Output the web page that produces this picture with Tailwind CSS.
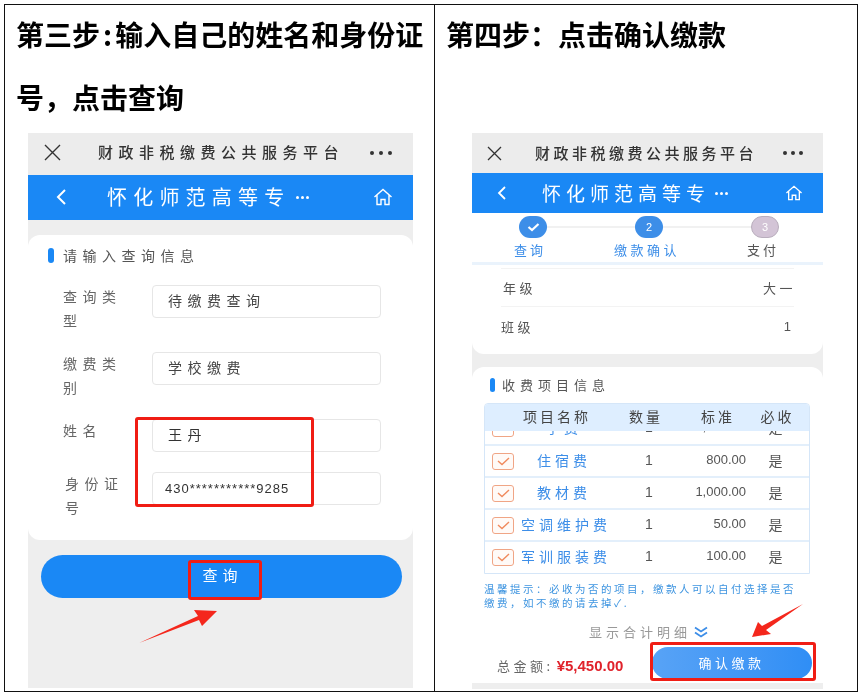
<!DOCTYPE html>
<html lang="zh">
<head>
<meta charset="utf-8">
<script src="https://cdn.jsdelivr.net/npm/@tailwindcss/browser@4"></script>
</head>
<body class="bg-white m-0">
<div class="relative w-[862px] h-[698px] overflow-hidden bg-white pt-[4px] pl-[4px] [font-family:'Noto_Sans_CJK_SC',sans-serif] text-[#444]">
  <div class="grid grid-cols-[430px_424px] w-[854px] h-[688px] border border-[#111]">
    <!-- left cell -->
    <div class="border-r border-[#111] h-full overflow-hidden">
      <h2 class="h-[130px] -mt-[2px] pl-[11px] text-[28px] leading-[63px] font-bold text-black blur-[0.3px] whitespace-nowrap">第三步<span class="mx-[3px]">:</span>输入自己的姓名和身份证<br>号&#xFF0C;点击查询</h2>
      <div class="ml-[23px] w-[385px] h-[555px] bg-[#eeeeee] blur-[0.3px] flex flex-col">
        <div class="h-[42px] shrink-0 bg-[#ececec] flex items-center pl-[15px] pr-[21px] pb-[3px]">
          <svg class="w-[19px] h-[19px]" viewBox="0 0 19 19" fill="none" stroke="#333" stroke-width="1.4"><path d="M2 2l15 15M17 2L2 17"/></svg>
          <span class="ml-[36px] text-[15px] tracking-[5.500px] font-medium text-[#333] whitespace-nowrap">财政非税缴费公共服务平台</span>
          <span class="ml-auto flex gap-[5px]"><i class="w-[4px] h-[4px] rounded-full bg-[#333]"></i><i class="w-[4px] h-[4px] rounded-full bg-[#333]"></i><i class="w-[4px] h-[4px] rounded-full bg-[#333]"></i></span>
        </div>
        <div class="h-[45px] shrink-0 bg-[#1a88f5] flex items-center pl-[27px] pr-[20px] pb-[1px] text-white">
          <svg class="w-[12px] h-[18px]" viewBox="0 0 12 18" fill="none" stroke="#fff" stroke-width="2"><path d="M10 2L3 9l7 7"/></svg>
          <span class="ml-[40px] text-[20px] tracking-[6.200px] whitespace-nowrap">怀化师范高等专</span>
          <span class="ml-[6px] flex gap-[2px]"><i class="w-[3px] h-[3px] rounded-full bg-white"></i><i class="w-[3px] h-[3px] rounded-full bg-white"></i><i class="w-[3px] h-[3px] rounded-full bg-white"></i></span>
          <svg class="ml-auto w-[20px] h-[18px]" viewBox="0 0 20 18" fill="none" stroke="#fff" stroke-width="1.4"><path d="M1.500 9L10 1.500 18.500 9M4 7v9.500h4v-5h4v5h4V7"/></svg>
        </div>
        <div class="mt-[15px] h-[305px] shrink-0 bg-white rounded-xl pt-[10px]">
          <div class="flex items-center h-[20px] pl-[20px]">
            <i class="w-[6px] h-[15px] rounded-full bg-[#1a88f5]"></i>
            <span class="ml-[9px] text-[14px] tracking-[5.500px] text-[#555]">请输入查询信息</span>
          </div>
          <div class="mt-[19px] flex flex-col gap-[19px] pl-[35px] text-[14px] tracking-[5.500px] leading-[24px] text-[#666]">
            <div class="flex items-start">
              <div class="w-[60px] mr-[29px]">查询类型</div>
              <div class="mt-[1px] w-[229px] h-[33px] border border-[#e6e6e6] rounded-[4px] pl-[15px] leading-[29px] text-[#444]">待缴费查询</div>
            </div>
            <div class="flex items-start">
              <div class="w-[60px] mr-[29px]">缴费类别</div>
              <div class="mt-[1px] w-[229px] h-[33px] border border-[#e6e6e6] rounded-[4px] pl-[15px] leading-[29px] text-[#444]">学校缴费</div>
            </div>
            <div class="flex items-start">
              <div class="w-[60px] mr-[29px]">姓名</div>
              <div class="mt-[1px] w-[229px] h-[33px] border border-[#e6e6e6] rounded-[4px] pl-[15px] leading-[29px] text-[#333]">王丹</div>
            </div>
            <div class="flex items-start">
              <div class="w-[60px] ml-[2px] mr-[27px]">身份证号</div>
              <div class="mt-[1px] w-[229px] h-[33px] border border-[#e6e6e6] rounded-[4px] pl-[12px] leading-[31px] text-[#333] text-[13px] tracking-[1px] [font-family:'Liberation_Sans',sans-serif] whitespace-nowrap">430***********9285</div>
            </div>
          </div>
        </div>
        <div class="mt-[15px] ml-[13px] mr-[11px] h-[43px] shrink-0 rounded-full bg-[#1a88f5] flex items-center justify-center pl-[2px] pb-[2px] text-white text-[15px] tracking-[5px]">查询</div>
      </div>
    </div>
    <!-- right cell -->
    <div class="h-full overflow-hidden">
      <h2 class="h-[130px] -mt-[2px] pl-[11px] text-[28px] leading-[63px] font-bold text-black blur-[0.3px] whitespace-nowrap">第四步&#xFF1A;点击确认缴款</h2>
      <div class="ml-[37px] w-[351px] h-[556px] bg-[#eeeeee] blur-[0.3px] flex flex-col">
        <div class="h-[40px] shrink-0 bg-[#ececec] flex items-center pl-[14px] pr-[20px]">
          <svg class="w-[17px] h-[17px]" viewBox="0 0 17 17" fill="none" stroke="#333" stroke-width="1.300"><path d="M2 2l13 13M15 2L2 15"/></svg>
          <span class="ml-[32px] text-[15px] tracking-[3.500px] font-medium text-[#333] whitespace-nowrap">财政非税缴费公共服务平台</span>
          <span class="ml-auto flex gap-[4px]"><i class="w-[4px] h-[4px] rounded-full bg-[#333]"></i><i class="w-[4px] h-[4px] rounded-full bg-[#333]"></i><i class="w-[4px] h-[4px] rounded-full bg-[#333]"></i></span>
        </div>
        <div class="h-[40px] shrink-0 bg-[#1a88f5] flex items-center pl-[24px] pr-[20px] text-white">
          <svg class="w-[11px] h-[16px]" viewBox="0 0 11 16" fill="none" stroke="#fff" stroke-width="1.800"><path d="M9 2L3 8l6 6"/></svg>
          <span class="ml-[35px] text-[19px] tracking-[5px] whitespace-nowrap">怀化师范高等专</span>
          <span class="ml-[5px] flex gap-[2px]"><i class="w-[3px] h-[3px] rounded-full bg-white"></i><i class="w-[3px] h-[3px] rounded-full bg-white"></i><i class="w-[3px] h-[3px] rounded-full bg-white"></i></span>
          <svg class="ml-auto w-[18px] h-[16px]" viewBox="0 0 20 18" fill="none" stroke="#fff" stroke-width="1.500"><path d="M1.500 9L10 1.500 18.500 9M4 7v9.500h4v-5h4v5h4V7"/></svg>
        </div>
        <div class="h-[141px] shrink-0 bg-white rounded-b-xl">
          <div class="relative h-[52px] pl-[3px] pt-[3px] flex border-b-[3px] border-[#eaf3fc]">
            <div class="absolute left-[61px] right-[57px] top-[13px] h-[2px] bg-[#f1f1f1]"></div>
            <div class="relative w-[116px] flex flex-col items-center">
              <div class="w-[28px] h-[22px] rounded-full bg-[#3d8ee8] flex items-center justify-center"><svg class="w-[13px] h-[10px]" viewBox="0 0 13 10" fill="none" stroke="#fff" stroke-width="2.200"><path d="M1.500 5l3.500 3 6.500-6"/></svg></div>
              <span class="mt-[2px] -ml-[6px] text-[13px] leading-[20px] tracking-[3px] text-[#3d8ee8] whitespace-nowrap">查询</span>
            </div>
            <div class="relative w-[116px] flex flex-col items-center">
              <div class="w-[28px] h-[22px] rounded-full bg-[#3d8ee8] flex items-center justify-center text-white text-[11px] leading-none [font-family:'Liberation_Sans',sans-serif]">2</div>
              <span class="mt-[2px] -ml-[4px] text-[13px] leading-[20px] tracking-[3.500px] text-[#3d8ee8] whitespace-nowrap">缴款确认</span>
            </div>
            <div class="relative w-[116px] flex flex-col items-center">
              <div class="w-[28px] h-[22px] rounded-full bg-[#d3c4d6] border border-[#b9aebd] flex items-center justify-center text-white text-[11px] leading-none [font-family:'Liberation_Sans',sans-serif]">3</div>
              <span class="mt-[2px] -ml-[4px] text-[13px] leading-[20px] tracking-[3px] text-[#555] whitespace-nowrap">支付</span>
            </div>
          </div>
          <div class="mx-[29px] mt-[3px] text-[13px] tracking-[3.500px] text-[#555]">
            <div class="h-[39px] pt-[1px] border-y border-[#f3f3f3] flex items-center justify-between pl-[2px]"><span>年级</span><span class="-mr-[2px]">大一</span></div>
            <div class="h-[38px] pt-[1px] flex items-center justify-between"><span>班级</span><span class="[font-family:'Liberation_Sans',sans-serif] tracking-normal pr-[3px]">1</span></div>
          </div>
        </div>
        <div class="mt-[13px] h-[316px] shrink-0 bg-white rounded-t-xl flex flex-col">
          <div class="flex items-center h-[20px] mt-[8px] pl-[18px]">
            <i class="w-[5px] h-[14px] rounded-full bg-[#1a88f5]"></i>
            <span class="ml-[7px] text-[13px] tracking-[5px] text-[#555]">收费项目信息</span>
          </div>
          <div class="mt-[8px] mx-[12px] w-[326px] h-[171px] border border-[#d5e6f8] rounded-t-[4px] overflow-hidden">
            <div class="h-[27px] pb-[2px] bg-[#deeeff] grid grid-cols-[36px_86px_84px_55px_1fr] items-center text-[14px] tracking-[3px] text-[#444] whitespace-nowrap">
              <span></span>
              <span class="text-center pr-[14px]">项目名称</span>
              <span class="text-center pr-[6px]">数量</span>
              <span class="text-right pr-[11px]">标准</span>
              <span class="text-center">必收</span>
            </div>
            <div class="h-[15px] overflow-hidden flex items-end border-b-2 border-[#e3effb]">
              <div class="w-full h-[32px] shrink-0 grid grid-cols-[36px_86px_84px_55px_1fr] items-center text-[14px] tracking-[4px] text-[#555] [&>span:not(:first-child)]:pb-[2px]">
                <span class="ml-[7px] w-[22px] h-[17px] border border-[#f0a585] rounded-[3px]"></span>
                <span class="text-center text-[#3d8ee8]">学费</span>
                <span class="text-center [font-family:'Liberation_Sans',sans-serif] tracking-normal">1</span>
                <span class="text-right [font-family:'Liberation_Sans',sans-serif] tracking-normal text-[13px] whitespace-nowrap">3,500.00</span>
                <span class="text-center">是</span>
              </div>
            </div>
            <div class="h-[32px] border-b-2 border-[#e3effb] grid grid-cols-[36px_86px_84px_55px_1fr] items-center text-[14px] tracking-[4px] text-[#555] [&>span:not(:first-child)]:pb-[2px]">
              <span class="ml-[7px] w-[22px] h-[17px] border border-[#f0a585] rounded-[3px] bg-[#fffaf7] flex items-center justify-center"><svg class="w-[13px] h-[9px]" viewBox="0 0 13 9" fill="none" stroke="#f08a5d" stroke-width="1.400"><path d="M1 4l4 3.500L12 1"/></svg></span>
              <span class="text-center text-[#3d8ee8]">住宿费</span>
              <span class="text-center [font-family:'Liberation_Sans',sans-serif] tracking-normal">1</span>
              <span class="text-right [font-family:'Liberation_Sans',sans-serif] tracking-normal text-[13px]">800.00</span>
              <span class="text-center">是</span>
            </div>
            <div class="h-[32px] border-b-2 border-[#e3effb] grid grid-cols-[36px_86px_84px_55px_1fr] items-center text-[14px] tracking-[4px] text-[#555] [&>span:not(:first-child)]:pb-[2px]">
              <span class="ml-[7px] w-[22px] h-[17px] border border-[#f0a585] rounded-[3px] bg-[#fffaf7] flex items-center justify-center"><svg class="w-[13px] h-[9px]" viewBox="0 0 13 9" fill="none" stroke="#f08a5d" stroke-width="1.400"><path d="M1 4l4 3.500L12 1"/></svg></span>
              <span class="text-center text-[#3d8ee8]">教材费</span>
              <span class="text-center [font-family:'Liberation_Sans',sans-serif] tracking-normal">1</span>
              <span class="text-right [font-family:'Liberation_Sans',sans-serif] tracking-normal text-[13px]">1,000.00</span>
              <span class="text-center">是</span>
            </div>
            <div class="h-[32px] border-b-2 border-[#e3effb] grid grid-cols-[36px_86px_84px_55px_1fr] items-center text-[14px] tracking-[4px] text-[#555] [&>span:not(:first-child)]:pb-[2px]">
              <span class="ml-[7px] w-[22px] h-[17px] border border-[#f0a585] rounded-[3px] bg-[#fffaf7] flex items-center justify-center"><svg class="w-[13px] h-[9px]" viewBox="0 0 13 9" fill="none" stroke="#f08a5d" stroke-width="1.400"><path d="M1 4l4 3.500L12 1"/></svg></span>
              <span class="text-center text-[#3d8ee8] whitespace-nowrap">空调维护费</span>
              <span class="text-center [font-family:'Liberation_Sans',sans-serif] tracking-normal">1</span>
              <span class="text-right [font-family:'Liberation_Sans',sans-serif] tracking-normal text-[13px]">50.00</span>
              <span class="text-center">是</span>
            </div>
            <div class="h-[32px] pb-[2px] grid grid-cols-[36px_86px_84px_55px_1fr] items-center text-[14px] tracking-[4px] text-[#555] [&>span:not(:first-child)]:pb-[2px]">
              <span class="ml-[7px] w-[22px] h-[17px] border border-[#f0a585] rounded-[3px] bg-[#fffaf7] flex items-center justify-center"><svg class="w-[13px] h-[9px]" viewBox="0 0 13 9" fill="none" stroke="#f08a5d" stroke-width="1.400"><path d="M1 4l4 3.500L12 1"/></svg></span>
              <span class="text-center text-[#3d8ee8] whitespace-nowrap">军训服装费</span>
              <span class="text-center [font-family:'Liberation_Sans',sans-serif] tracking-normal">1</span>
              <span class="text-right [font-family:'Liberation_Sans',sans-serif] tracking-normal text-[13px]">100.00</span>
              <span class="text-center">是</span>
            </div>
          </div>
          <p class="mt-[8px] ml-[12px] w-[320px] text-[10.500px] leading-[14px] tracking-[2.500px] text-[#3d94e0]">温馨提示&#xFF1A;必收为否的项目&#xFF0C;缴款人可以自付选择是否缴费&#xFF0C;如不缴的请去掉✓.</p>
          <div class="mt-[12px] flex items-center pl-[117px] h-[20px]">
            <span class="text-[13px] tracking-[4px] text-[#999] whitespace-nowrap">显示合计明细</span>
            <svg class="ml-[3px] w-[14px] h-[12px]" viewBox="0 0 14 12" fill="none" stroke="#3d8ee8" stroke-width="1.800"><path d="M1 1.500l6 4 6-4M1 6.500l6 4 6-4"/></svg>
          </div>
          <div class="mt-[5px] flex items-center pl-[25px]">
            <span class="mt-[6px] text-[13px] tracking-[3.500px] text-[#666] whitespace-nowrap">总金额:</span>
            <span class="mt-[6px] ml-[3px] w-[95px] text-[15px] font-bold text-[#e0222b] [font-family:'Liberation_Sans',sans-serif] whitespace-nowrap">¥5,450.00</span>
            <div class="w-[160px] h-[32px] rounded-full bg-gradient-to-r from-[#58a3f6] to-[#2f8ef5] flex items-center justify-center text-white text-[13px] tracking-[3.500px]">确认缴款</div>
          </div>
        </div>
      </div>
    </div>
  </div>
  <!-- annotations drawn over the screenshots -->
  <div class="absolute left-[135px] top-[417px] w-[179px] h-[90px] border-[3px] border-[#f01d14] rounded-[3px]"></div>
  <div class="absolute left-[188px] top-[560px] w-[74px] h-[40px] border-[3px] border-[#f01d14] rounded-[3px]"></div>
  <div class="absolute left-[650px] top-[642px] w-[166px] h-[39px] border-[3px] border-[#f01d14] rounded-[3px]"></div>
  <svg class="absolute left-0 top-0 w-[862px] h-[698px] pointer-events-none" viewBox="0 0 862 698" fill="#f4271c">
    <polygon points="139,643 198,616 194,610 217,611 202,626 199,620"/>
    <polygon points="803,604 766,630 771,634 752,637 758,622 762,626"/>
  </svg>
</div>
</body>
</html>
